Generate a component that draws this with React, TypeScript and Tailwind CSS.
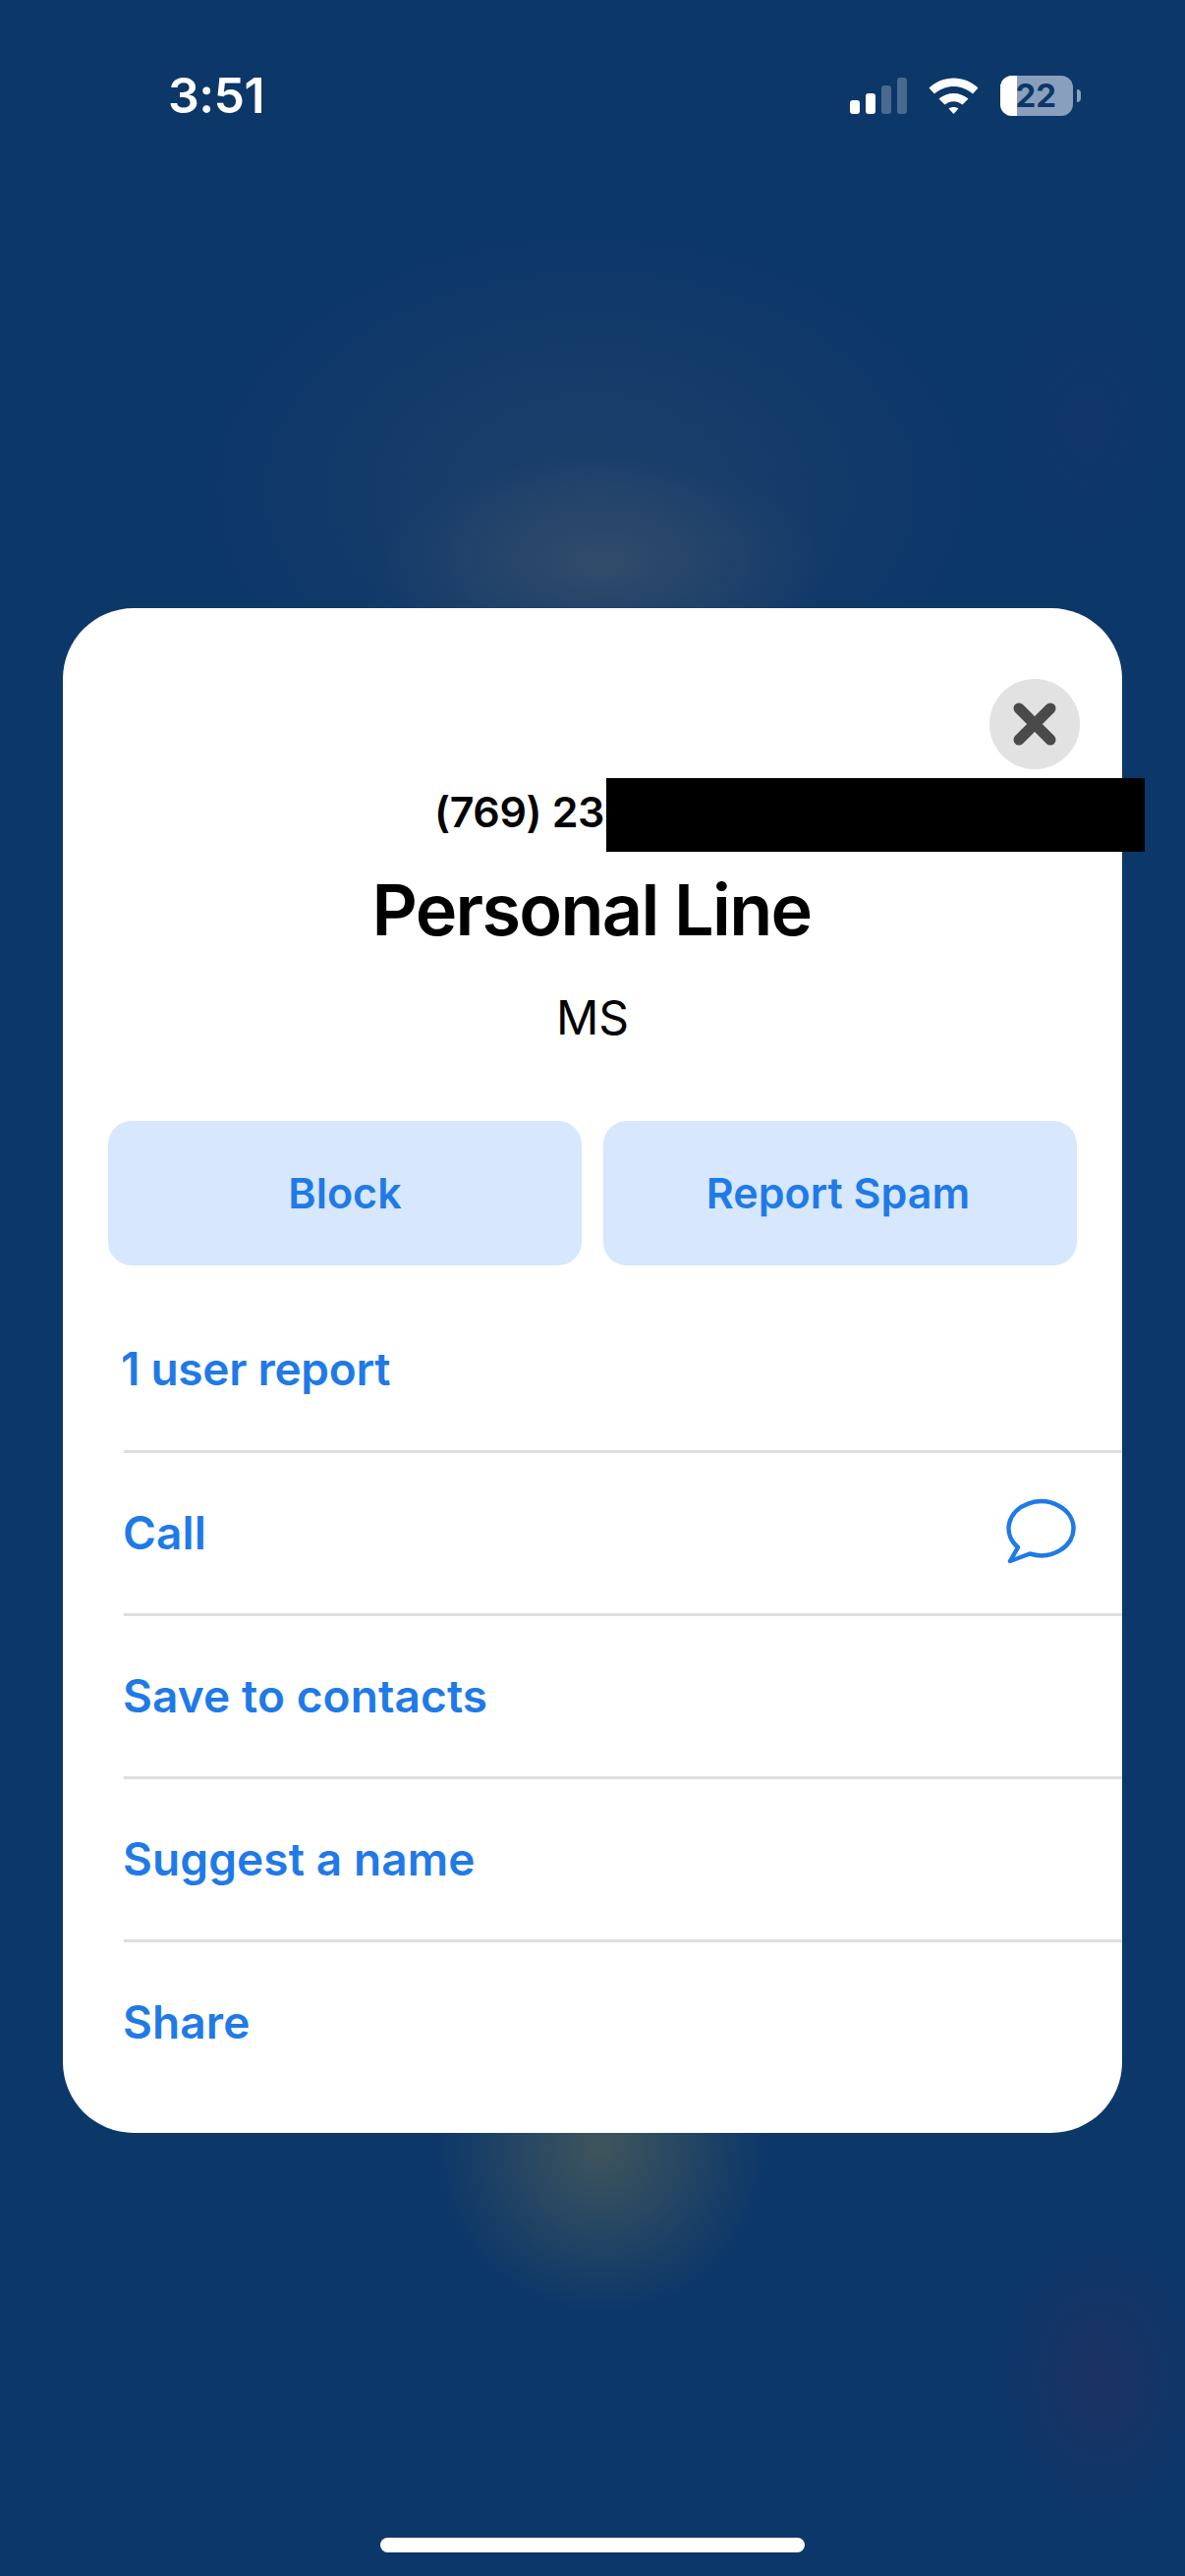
function StatusBar() {
  return (
    <div className="w-full h-[190px] shrink-0 flex items-start justify-between pt-[74px] pl-[171px] pr-[106px] text-white">
      <span className="text-[50px] leading-[46px] font-semibold tracking-[-0.6px]">3:51</span>
      <div className="flex items-start pt-[3px]">
        <div className="flex items-end gap-[6px] h-[37px] mt-[2px]">
          <div className="w-[10px] h-[14px] rounded-[3px] bg-white" />
          <div className="w-[10px] h-[21px] rounded-[3px] bg-white" />
          <div className="w-[10px] h-[29px] rounded-[3px] bg-white/25" />
          <div className="w-[10px] h-[37px] rounded-[3px] bg-white/25" />
        </div>
        <svg className="ml-[22px] mt-[2px]" width="51" height="37" viewBox="0 0 51 37" fill="white">
          <path d="M0.5 10.5C14 -3 37 -3 50.5 10.5L45 16.5C33.5 6.5 17.5 6.5 6 16.5Z" />
          <path d="M10.5 21.5C19 14 32 14 40.5 21.5L34.5 27.5C29 23 22 23 16.5 27.5Z" />
          <path d="M20.5 31.5C23.5 29.5 27.5 29.5 30.5 31.5L25.5 37Z" />
        </svg>
        <div className="relative ml-[22px] w-[74px] h-[41px] rounded-[12px] overflow-hidden bg-[#8a9fbb] flex items-center justify-end pr-[17px]">
          <div className="absolute left-0 top-0 bottom-0 w-[17px] bg-white" />
          <span className="relative text-[33px] leading-none font-bold text-[#0c3769]">22</span>
        </div>
        <div className="ml-[4px] mt-[14px] w-[4px] h-[13px] rounded-r-full bg-[#8a9fbb]" />
      </div>
    </div>
  );
}

function ChatBubble() {
  return (
    <svg className="mr-[-3px] mb-[6px]" width="80" height="72" viewBox="0 0 80 72" fill="none" stroke="#1f7ae8" strokeWidth="4.5" strokeLinejoin="round">
      <path d="M17 53L9 67L29 59.5A33 27.5 0 1 0 17 53Z" />
    </svg>
  );
}

const rows = ["Call", "Save to contacts", "Suggest a name", "Share"];

export default function App() {
  return (
    <div className="w-[1206px] h-[2622px] overflow-hidden flex flex-col items-center [font-family:Inter,sans-serif] bg-[#0c3769] bg-[radial-gradient(ellipse_230px_110px_at_612px_575px,rgba(95,100,105,0.36),transparent),radial-gradient(ellipse_400px_270px_at_600px_500px,rgba(60,80,110,0.35),transparent),radial-gradient(ellipse_170px_170px_at_612px_2185px,rgba(115,115,80,0.5),transparent),radial-gradient(ellipse_110px_150px_at_1120px_2420px,rgba(60,40,90,0.35),transparent),radial-gradient(ellipse_90px_130px_at_1105px_430px,rgba(40,50,110,0.18),transparent)]">
      <StatusBar />

      <div className="relative w-[1078px] h-[1552px] mt-[429px] shrink-0 bg-white rounded-[72px] flex flex-col">
        <button className="self-end mt-[72px] mr-[43px] w-[92px] h-[92px] rounded-full bg-[#e2e2e2] flex items-center justify-center">
          <svg width="44" height="44" viewBox="0 0 44 44" stroke="#4a4a4a" strokeWidth="11" strokeLinecap="round">
            <path d="M6 6L38 38M38 6L6 38" />
          </svg>
        </button>

        <p className="mt-[17px] pl-[378px] h-[52px] text-[43px] leading-[52px] font-semibold tracking-[-0.4px] text-black">(769) 23</p>
        <div className="absolute left-[553px] top-[173px] w-[548px] h-[75px] bg-black" />

        <h1 className="mt-[39px] pr-[2px] h-[70px] text-center text-[72px] leading-[70px] font-semibold tracking-[-1.7px] text-black">Personal Line</h1>
        <p className="mt-[50px] h-[50px] text-center text-[48px] leading-[50px] text-black">MS</p>

        <div className="mt-[80px] px-[46px] flex gap-[22px]">
          <button className="w-[482px] h-[147px] rounded-[24px] bg-[#d6e7fe] text-[#1f7ae8] text-[43px] font-semibold">Block</button>
          <button className="w-[482px] h-[147px] rounded-[24px] bg-[#d6e7fe] text-[#1f7ae8] text-[43px] font-semibold pr-[4px]">Report Spam</button>
        </div>

        <div className="mt-[22px] pl-[59px] h-[166px] flex items-center text-[46px] font-semibold tracking-[-0.3px] text-[#1f7ae8]">1 user report</div>

        {rows.map((row, i) => (
          <div key={row} className="ml-[62px] h-[166px] border-t-[3px] border-[#dedede] flex items-center justify-between pr-[46px] text-[46px] font-semibold tracking-[0.1px] text-[#1f7ae8]">
            <span className="ml-[-1px]">{row}</span>
            {i === 0 && <ChatBubble />}
          </div>
        ))}
      </div>

      <div className="mt-[412px] w-[432px] h-[15px] shrink-0 rounded-[8px] bg-white" />
    </div>
  );
}
